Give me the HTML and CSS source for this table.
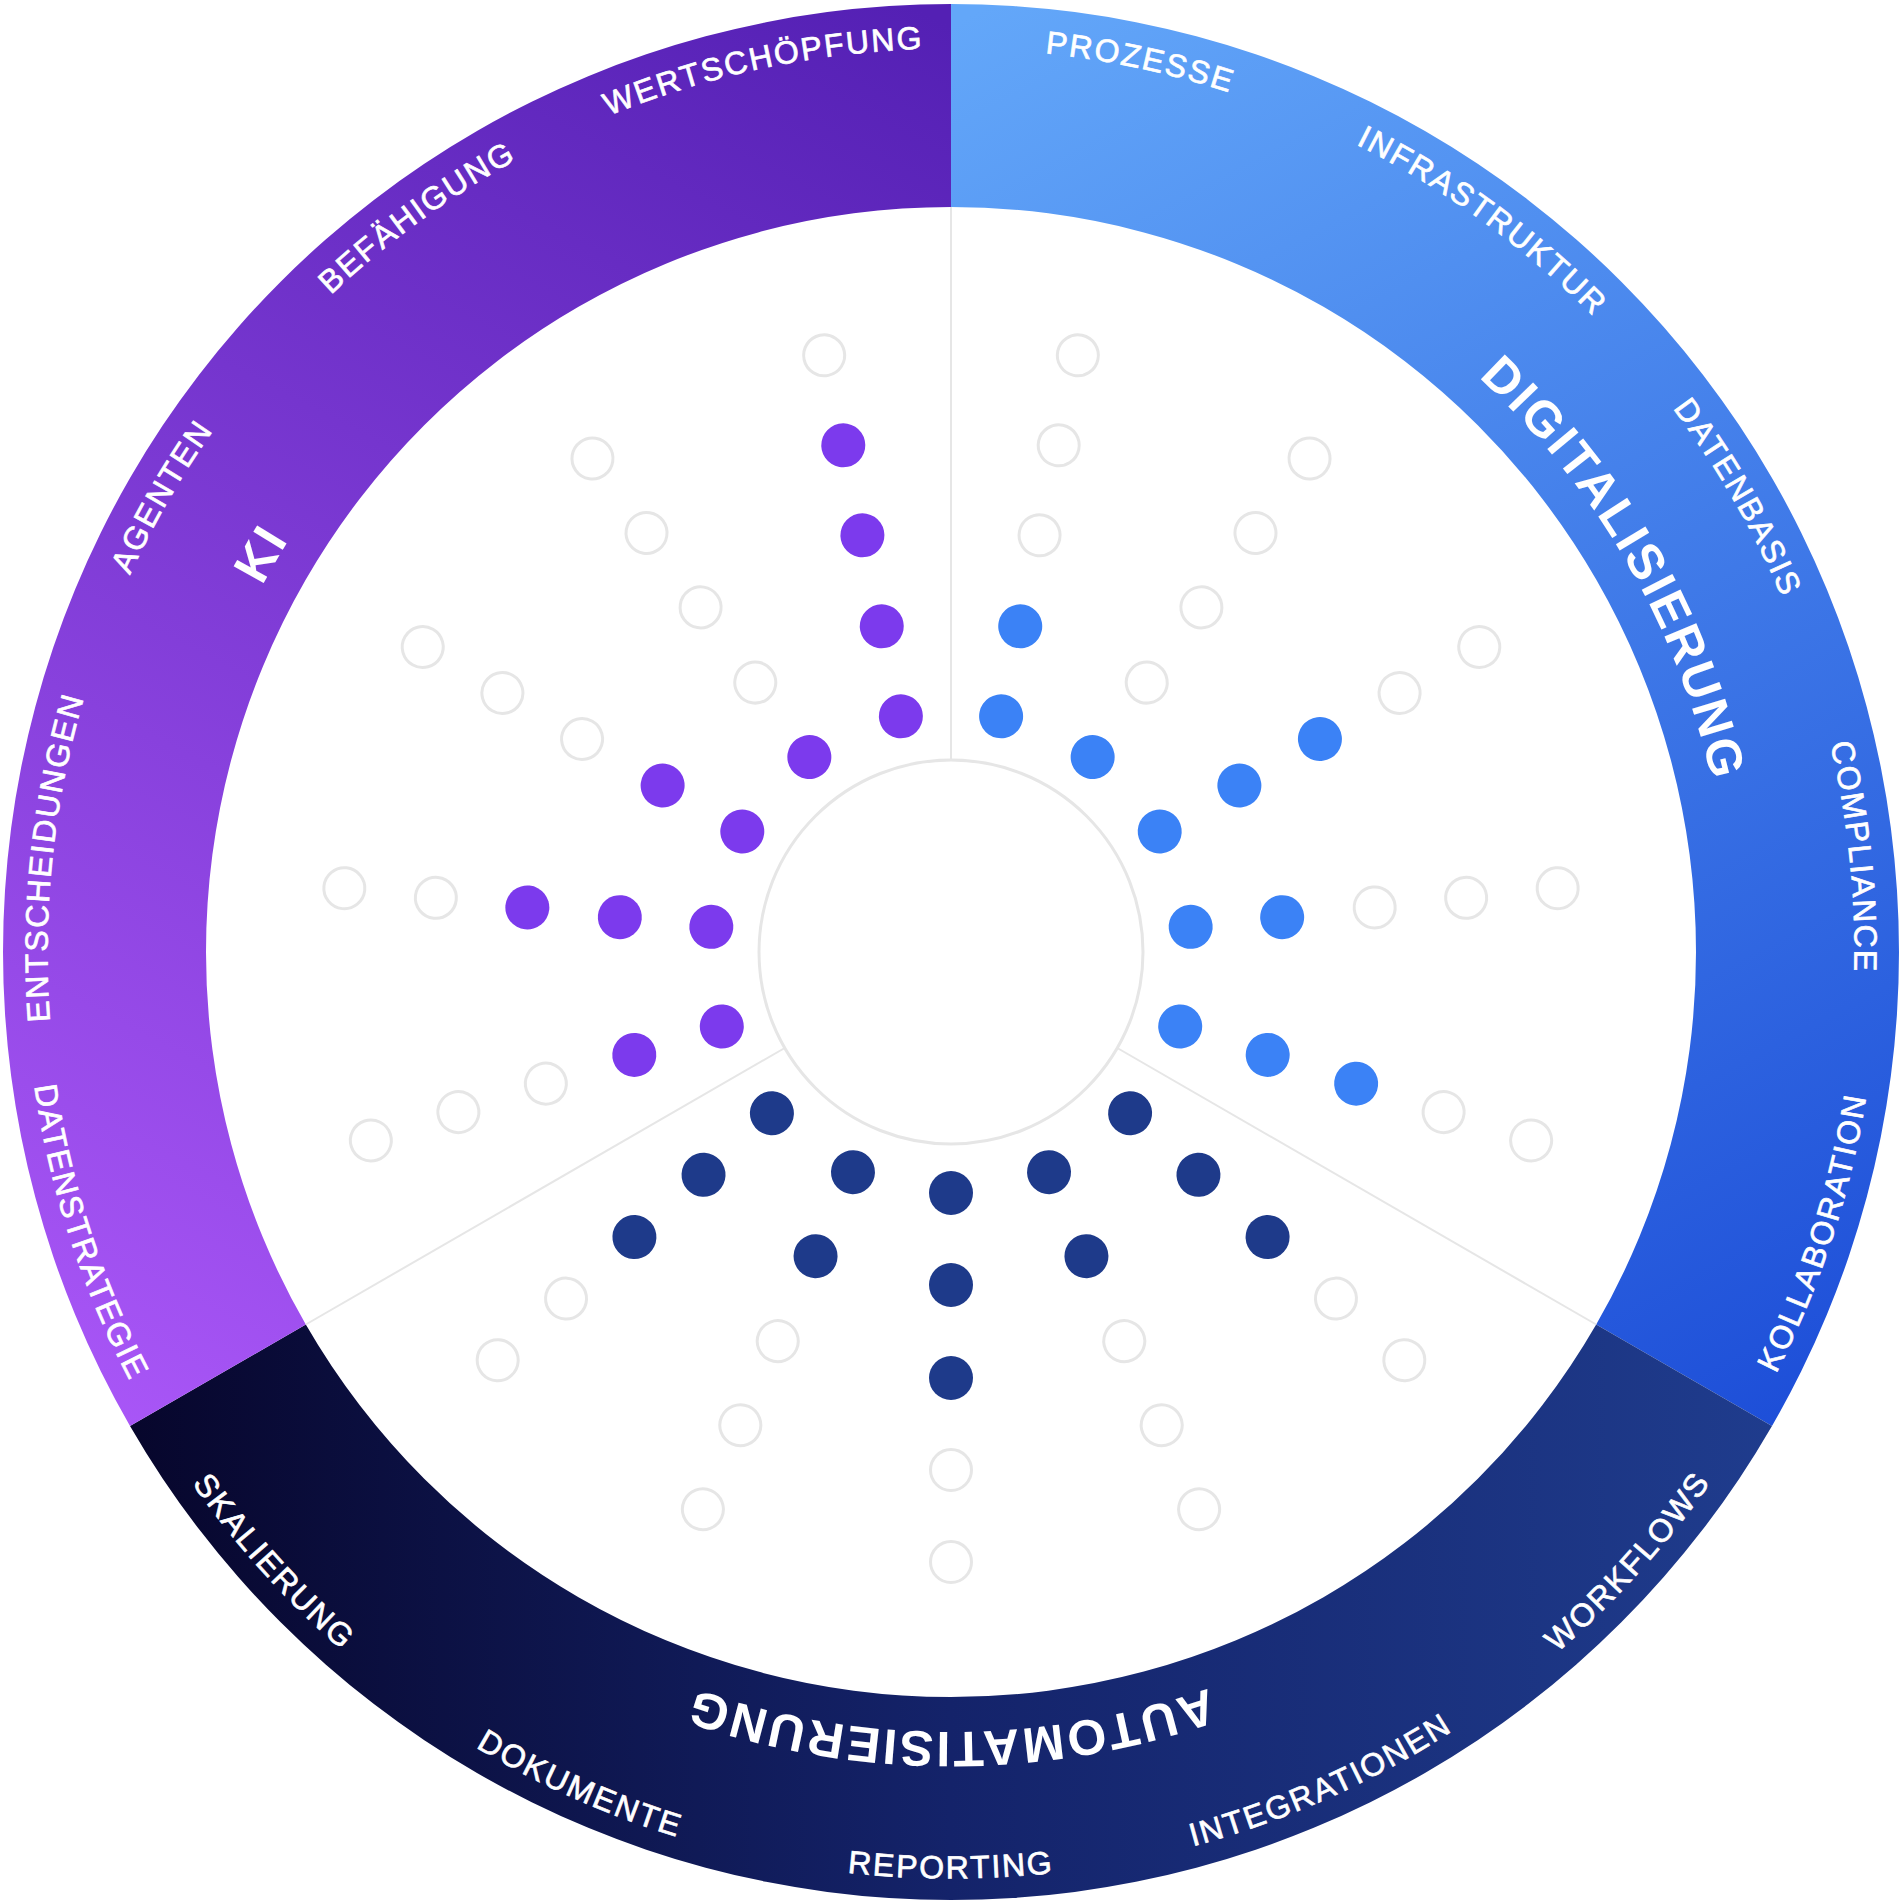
FILE: index.html
```html
<!DOCTYPE html>
<html lang="de">
<head>
<meta charset="utf-8">
<title>KI · Digitalisierung · Automatisierung</title>
<link rel="stylesheet" href="styles.css">
</head>
<body>
<main class="stage">
<svg class="wheel" viewBox="0 0 1902 1904" width="1902" height="1904" xmlns="http://www.w3.org/2000/svg">
  <defs>
    <linearGradient id="gDig" gradientUnits="userSpaceOnUse" x1="1000" y1="0" x2="1750" y2="1450">
      <stop offset="0" class="st-dig-a"/>
      <stop offset="1" class="st-dig-b"/>
    </linearGradient>
    <linearGradient id="gKi" gradientUnits="userSpaceOnUse" x1="900" y1="0" x2="150" y2="1450">
      <stop offset="0" class="st-ki-a"/>
      <stop offset="1" class="st-ki-b"/>
    </linearGradient>
    <linearGradient id="gAuto" gradientUnits="userSpaceOnUse" x1="130" y1="1426" x2="1772" y2="1426">
      <stop offset="0" class="st-auto-a"/>
      <stop offset="0.5" class="st-auto-m"/>
      <stop offset="1" class="st-auto-b"/>
    </linearGradient>
    <path id="cwSmall" d="M168.55 500.25 A903.5 903.5 0 0 1 1733.45 500.25"/>
    <path id="ccwSmall" d="M148.63 1415.25 A926.5 926.5 0 0 0 1753.37 1415.25"/>
    <path id="cwBig" d="M275.5 562 A780 780 0 0 1 1626.5 562"/>
  </defs>

  <!-- ring segments -->
  <path class="seg seg-dig" d="M951 4 A948 948 0 0 1 1771.99 1426 L1596.19 1324.5 A745 745 0 0 0 951 207 Z"/>
  <path class="seg seg-auto" d="M1771.99 1426 A948 948 0 0 1 130.01 1426 L305.81 1324.5 A745 745 0 0 0 1596.19 1324.5 Z"/>
  <path class="seg seg-ki" d="M130.01 1426 A948 948 0 0 1 951 4 L951 207 A745 745 0 0 0 305.81 1324.5 Z"/>

  <!-- dividers & hub -->
  <g class="dividers">
    <line x1="951" y1="760" x2="951" y2="207"/>
    <line x1="951" y1="760" x2="951" y2="207" transform="rotate(120 951 952)"/>
    <line x1="951" y1="760" x2="951" y2="207" transform="rotate(240 951 952)"/>
  </g>
  <circle class="hub" cx="951" cy="952" r="192"/>

  <!-- Digitalisierung rays -->
  <g transform="rotate(12 951 952)">
    <circle class="dot dig" cx="951" cy="711" r="22"/>
    <circle class="dot dig" cx="951" cy="619" r="22"/>
    <circle class="dot empty" cx="951" cy="526" r="20.5"/>
    <circle class="dot empty" cx="951" cy="434" r="20.5"/>
    <circle class="dot empty" cx="951" cy="342" r="20.5"/>
  </g>
  <g transform="rotate(36 951 952)">
    <circle class="dot dig" cx="951" cy="711" r="22"/>
    <circle class="dot empty" cx="951" cy="619" r="20.5"/>
    <circle class="dot empty" cx="951" cy="526" r="20.5"/>
    <circle class="dot empty" cx="951" cy="434" r="20.5"/>
    <circle class="dot empty" cx="951" cy="342" r="20.5"/>
  </g>
  <g transform="rotate(60 951 952)">
    <circle class="dot dig" cx="951" cy="711" r="22"/>
    <circle class="dot dig" cx="951" cy="619" r="22"/>
    <circle class="dot dig" cx="951" cy="526" r="22"/>
    <circle class="dot empty" cx="951" cy="434" r="20.5"/>
    <circle class="dot empty" cx="951" cy="342" r="20.5"/>
  </g>
  <g transform="rotate(84 951 952)">
    <circle class="dot dig" cx="951" cy="711" r="22"/>
    <circle class="dot dig" cx="951" cy="619" r="22"/>
    <circle class="dot empty" cx="951" cy="526" r="20.5"/>
    <circle class="dot empty" cx="951" cy="434" r="20.5"/>
    <circle class="dot empty" cx="951" cy="342" r="20.5"/>
  </g>
  <g transform="rotate(108 951 952)">
    <circle class="dot dig" cx="951" cy="711" r="22"/>
    <circle class="dot dig" cx="951" cy="619" r="22"/>
    <circle class="dot dig" cx="951" cy="526" r="22"/>
    <circle class="dot empty" cx="951" cy="434" r="20.5"/>
    <circle class="dot empty" cx="951" cy="342" r="20.5"/>
  </g>

  <!-- Automatisierung rays -->
  <g transform="rotate(132 951 952)">
    <circle class="dot auto" cx="951" cy="711" r="22"/>
    <circle class="dot auto" cx="951" cy="619" r="22"/>
    <circle class="dot auto" cx="951" cy="526" r="22"/>
    <circle class="dot empty" cx="951" cy="434" r="20.5"/>
    <circle class="dot empty" cx="951" cy="342" r="20.5"/>
  </g>
  <g transform="rotate(156 951 952)">
    <circle class="dot auto" cx="951" cy="711" r="22"/>
    <circle class="dot auto" cx="951" cy="619" r="22"/>
    <circle class="dot empty" cx="951" cy="526" r="20.5"/>
    <circle class="dot empty" cx="951" cy="434" r="20.5"/>
    <circle class="dot empty" cx="951" cy="342" r="20.5"/>
  </g>
  <g transform="rotate(180 951 952)">
    <circle class="dot auto" cx="951" cy="711" r="22"/>
    <circle class="dot auto" cx="951" cy="619" r="22"/>
    <circle class="dot auto" cx="951" cy="526" r="22"/>
    <circle class="dot empty" cx="951" cy="434" r="20.5"/>
    <circle class="dot empty" cx="951" cy="342" r="20.5"/>
  </g>
  <g transform="rotate(204 951 952)">
    <circle class="dot auto" cx="951" cy="711" r="22"/>
    <circle class="dot auto" cx="951" cy="619" r="22"/>
    <circle class="dot empty" cx="951" cy="526" r="20.5"/>
    <circle class="dot empty" cx="951" cy="434" r="20.5"/>
    <circle class="dot empty" cx="951" cy="342" r="20.5"/>
  </g>
  <g transform="rotate(228 951 952)">
    <circle class="dot auto" cx="951" cy="711" r="22"/>
    <circle class="dot auto" cx="951" cy="619" r="22"/>
    <circle class="dot auto" cx="951" cy="526" r="22"/>
    <circle class="dot empty" cx="951" cy="434" r="20.5"/>
    <circle class="dot empty" cx="951" cy="342" r="20.5"/>
  </g>

  <!-- KI rays -->
  <g transform="rotate(252 951 952)">
    <circle class="dot ki" cx="951" cy="711" r="22"/>
    <circle class="dot ki" cx="951" cy="619" r="22"/>
    <circle class="dot empty" cx="951" cy="526" r="20.5"/>
    <circle class="dot empty" cx="951" cy="434" r="20.5"/>
    <circle class="dot empty" cx="951" cy="342" r="20.5"/>
  </g>
  <g transform="rotate(276 951 952)">
    <circle class="dot ki" cx="951" cy="711" r="22"/>
    <circle class="dot ki" cx="951" cy="619" r="22"/>
    <circle class="dot ki" cx="951" cy="526" r="22"/>
    <circle class="dot empty" cx="951" cy="434" r="20.5"/>
    <circle class="dot empty" cx="951" cy="342" r="20.5"/>
  </g>
  <g transform="rotate(300 951 952)">
    <circle class="dot ki" cx="951" cy="711" r="22"/>
    <circle class="dot ki" cx="951" cy="619" r="22"/>
    <circle class="dot empty" cx="951" cy="526" r="20.5"/>
    <circle class="dot empty" cx="951" cy="434" r="20.5"/>
    <circle class="dot empty" cx="951" cy="342" r="20.5"/>
  </g>
  <g transform="rotate(324 951 952)">
    <circle class="dot ki" cx="951" cy="711" r="22"/>
    <circle class="dot empty" cx="951" cy="619" r="20.5"/>
    <circle class="dot empty" cx="951" cy="526" r="20.5"/>
    <circle class="dot empty" cx="951" cy="434" r="20.5"/>
    <circle class="dot empty" cx="951" cy="342" r="20.5"/>
  </g>
  <g transform="rotate(348 951 952)">
    <circle class="dot ki" cx="951" cy="711" r="22"/>
    <circle class="dot ki" cx="951" cy="619" r="22"/>
    <circle class="dot ki" cx="951" cy="526" r="22"/>
    <circle class="dot ki" cx="951" cy="434" r="22"/>
    <circle class="dot empty" cx="951" cy="342" r="20.5"/>
  </g>

  <!-- section titles -->
  <g class="titles">
    <text class="title" transform="rotate(60 951 952)"><textPath href="#cwBig" startOffset="50%">DIGITALISIERUNG</textPath></text>
    <text class="title" transform="rotate(180 951 952)"><textPath href="#cwBig" startOffset="50%">AUTOMATISIERUNG</textPath></text>
    <text class="title" transform="rotate(300 951 952)"><textPath href="#cwBig" startOffset="50%">KI</textPath></text>
  </g>

  <!-- item labels -->
  <g class="labels">
    <text class="label" transform="rotate(12 951 952)"><textPath href="#cwSmall" startOffset="50%">PROZESSE</textPath></text>
    <text class="label" transform="rotate(36 951 952)"><textPath href="#cwSmall" startOffset="50%">INFRASTRUKTUR</textPath></text>
    <text class="label" transform="rotate(60 951 952)"><textPath href="#cwSmall" startOffset="50%">DATENBASIS</textPath></text>
    <text class="label" transform="rotate(84 951 952)"><textPath href="#cwSmall" startOffset="50%">COMPLIANCE</textPath></text>
    <text class="label" transform="rotate(-72 951 952)"><textPath href="#ccwSmall" startOffset="50%">KOLLABORATION</textPath></text>
    <text class="label" transform="rotate(-48 951 952)"><textPath href="#ccwSmall" startOffset="50%">WORKFLOWS</textPath></text>
    <text class="label" transform="rotate(-24 951 952)"><textPath href="#ccwSmall" startOffset="50%">INTEGRATIONEN</textPath></text>
    <text class="label"><textPath href="#ccwSmall" startOffset="50%">REPORTING</textPath></text>
    <text class="label" transform="rotate(24 951 952)"><textPath href="#ccwSmall" startOffset="50%">DOKUMENTE</textPath></text>
    <text class="label" transform="rotate(48 951 952)"><textPath href="#ccwSmall" startOffset="50%">SKALIERUNG</textPath></text>
    <text class="label" transform="rotate(72 951 952)"><textPath href="#ccwSmall" startOffset="50%">DATENSTRATEGIE</textPath></text>
    <text class="label" transform="rotate(-84 951 952)"><textPath href="#cwSmall" startOffset="50%">ENTSCHEIDUNGEN</textPath></text>
    <text class="label" transform="rotate(-60 951 952)"><textPath href="#cwSmall" startOffset="50%">AGENTEN</textPath></text>
    <text class="label" transform="rotate(-36 951 952)"><textPath href="#cwSmall" startOffset="50%">BEFÄHIGUNG</textPath></text>
    <text class="label" transform="rotate(-12 951 952)"><textPath href="#cwSmall" startOffset="50%">WERTSCHÖPFUNG</textPath></text>
  </g>
</svg>
</main>
</body>
</html>
```

FILE: styles.css
```css
html, body {
  margin: 0;
  padding: 0;
  background: #ffffff;
  overflow: hidden;
}

.stage {
  display: block;
  width: 1902px;
  height: 1904px;
}

.wheel {
  display: block;
  width: 1902px;
  height: 1904px;
}

.st-dig-a { stop-color: #63a7f9; }
.st-dig-b { stop-color: #1d4ed8; }
.st-ki-a { stop-color: #5420b4; }
.st-ki-b { stop-color: #a956f7; }
.st-auto-a { stop-color: #07062c; }
.st-auto-m { stop-color: #14236a; }
.st-auto-b { stop-color: #1f3c8d; }

.seg-dig { fill: url(#gDig); }
.seg-ki { fill: url(#gKi); }
.seg-auto { fill: url(#gAuto); }

.dividers line {
  stroke: #e6e6e6;
  stroke-width: 2;
}

.hub {
  fill: #ffffff;
  stroke: #e6e6e6;
  stroke-width: 3;
}

.dot.ki { fill: #7c3aed; }
.dot.dig { fill: #3b82f6; }
.dot.auto { fill: #1e3a8a; }
.dot.empty {
  fill: none;
  stroke: #e6e6e6;
  stroke-width: 3;
}

.title {
  font-family: "Liberation Sans", Arial, sans-serif;
  font-weight: 700;
  font-size: 50px;
  letter-spacing: 2.5px;
  fill: #ffffff;
  text-anchor: middle;
}

.label {
  font-family: "Liberation Sans", Arial, sans-serif;
  font-weight: 400;
  font-size: 32px;
  letter-spacing: 2px;
  fill: #ffffff;
  stroke: #ffffff;
  stroke-width: 0.7px;
  text-anchor: middle;
}
```
